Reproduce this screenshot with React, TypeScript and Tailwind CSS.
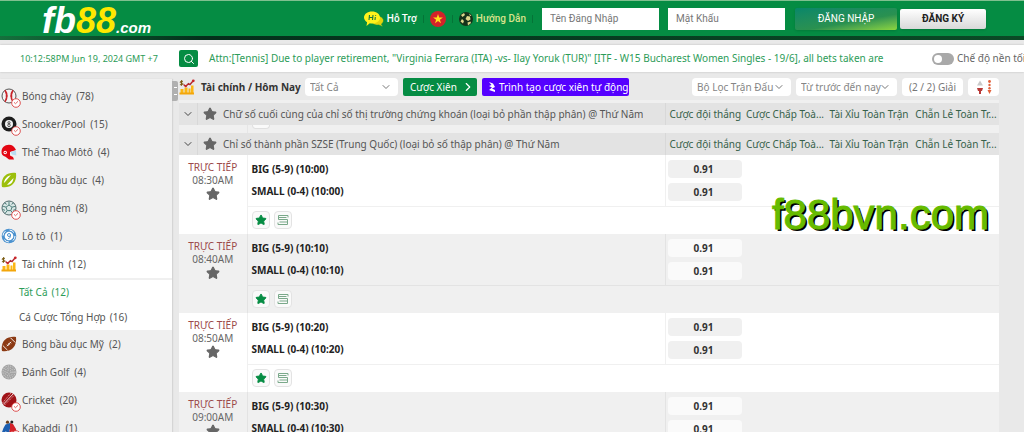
import { useState, type ReactNode } from "react";
import { ChevronDown, ChevronRight, Search, Star } from "lucide-react";

type Sport = {
  name: string;
  count: number;
  icon: ReactNode;
  live?: boolean;
};

type Match = {
  time: string;
  draw: string;
};

/* Sport icons */
const BaseballIcon = () => (
  <svg viewBox="0 0 16 16" className="size-4">
    <circle cx="8" cy="8" r="7" fill="#f4f4f4" stroke="#555" strokeWidth="1" />
    <path d="M4 2.300c2.400 3.200 2.400 8.200 0 11.400M12 2.300c-2.400 3.200-2.400 8.200 0 11.400" fill="none" stroke="#c9252b" strokeWidth="1.600" />
    <path d="M4 5l2-.6M4.500 8h2.200M4 11l2 .6M12 5l-2-.6M11.500 8H9.300" stroke="#c9252b" strokeWidth="0.800" />
  </svg>
);

const PoolIcon = () => (
  <svg viewBox="0 0 16 16" className="size-4">
    <circle cx="8" cy="8" r="7.500" fill="#1d1d1d" />
    <circle cx="8" cy="8" r="4" fill="#f2f2f2" />
    <circle cx="8" cy="6.700" r="1.100" fill="none" stroke="#333" strokeWidth="0.800" />
    <circle cx="8" cy="9.300" r="1.300" fill="none" stroke="#333" strokeWidth="0.800" />
  </svg>
);

const HelmetIcon = () => (
  <svg viewBox="0 0 16 16" className="size-4">
    <path d="M8 .8C3.500.8.5 3.800.5 8c0 2.500 1.300 4 4 4.800L8 15.500h5l-1-2.500-3-1.500V8l6-2C13.500 2.500 11 .8 8 .8z" fill="#e30613" />
    <path d="M9.500 8l5.500-1.500.3 5-4.300-1z" fill="#b9dcf2" />
    <circle cx="4.200" cy="8.500" r="1.700" fill="#fff" />
    <circle cx="4.200" cy="8.500" r="0.800" fill="#e30613" />
  </svg>
);

const RugbyIcon = () => (
  <svg viewBox="0 0 16 16" className="size-4">
    <path d="M1 15C.3 11 1 6.500 4 3.800 7 1 11 .5 15 1c.6 4-.3 8.300-3 11-2.800 2.800-7 3.700-11 3z" fill="#9cbf0c" />
    <path d="M2.800 11C3.200 8.500 4.500 5.800 7 4.200L10 3 4 10zM6 12.800L12.500 6c-.3 2.500-1 4.500-2.500 5.600-1.200.9-2.500 1.200-4 1.200z" fill="#fff" />
  </svg>
);

const HandballIcon = () => (
  <svg viewBox="0 0 16 16" className="size-4">
    <circle cx="8" cy="8" r="7" fill="#d9e7e6" stroke="#50686a" strokeWidth="1" />
    <path d="M8 5l3 2.200-1.200 3.400H6.200L5 7.200zM8 5V1.500M11 7.200l3.500-1M9.800 10.600l2.200 3M6.200 10.600L4 13.500M5 7.200L1.500 6M3.500 3l2.200 1.300M12.500 3l-2 1.300M1.500 9.500l2.500.8M14.500 9.500l-2.300.8" fill="none" stroke="#50807c" strokeWidth="1" />
  </svg>
);

const LottoIcon = () => (
  <svg viewBox="0 0 16 16" className="size-4">
    <circle cx="8" cy="8" r="7.300" fill="#4b92cf" />
    <circle cx="8" cy="8" r="6" fill="none" stroke="#fff" strokeWidth="1" strokeDasharray="5 4.400" />
    <circle cx="8" cy="8" r="4.300" fill="#fff" />
    <circle cx="8" cy="7" r="1.500" fill="none" stroke="#4b92cf" strokeWidth="1" />
    <path d="M9.500 7c.1 2-.6 3.300-2.200 3.600" fill="none" stroke="#4b92cf" strokeWidth="1" />
  </svg>
);

const FinanceIcon = () => (
  <svg viewBox="0 0 16 16" className="size-4 shrink-0">
    <path d="M1.500 10h3v4h-3zM5.500 8.500h3v5.500h-3zM9.500 9.500h2v4.500h-2zM12 6.500h2.500V14H12z" fill="#fbb614" />
    <path d="M.5 13.500h14.500V15.500H.5z" fill="#f3a60b" />
    <path d="M4.500 5.500l2.200 1.800 2.800-2.600 1.500.8L14 2" fill="none" stroke="#b22a2e" strokeWidth="1.400" />
    <circle cx="14.300" cy="1.800" r="1.400" fill="#c9252b" />
    <circle cx="6.700" cy="7.200" r="1.100" fill="#c9252b" />
    <path d="M4 2.300H2.200c-1.400 0-1.400 1.700 0 1.700h.6c1.500 0 1.500 1.700 0 1.700H.9M2.500 1.200v5.500" fill="none" stroke="#7a5a10" strokeWidth="1" />
  </svg>
);

const FootballIcon = () => (
  <svg viewBox="0 0 16 16" className="size-4">
    <path d="M1 15C.3 11 1 6.500 4 3.800 7 1 11 .5 15 1c.6 4-.3 8.300-3 11-2.800 2.800-7 3.700-11 3z" fill="#8c3a14" />
    <path d="M1.800 9.500l4.700 4.700M9.500 1.800l4.700 4.700" stroke="#fff" strokeWidth="0.900" />
    <path d="M5.800 10.200l4.400-4.400M6 8.500L7.500 10M7.300 7.200l1.500 1.500M8.600 5.900l1.500 1.500" stroke="#fff" strokeWidth="0.800" />
  </svg>
);

const GolfIcon = () => (
  <svg viewBox="0 0 16 16" className="size-4">
    <circle cx="8" cy="8" r="7.500" fill="#a4a4a4" />
    <circle cx="8" cy="8" r="6" fill="none" stroke="#dadada" strokeWidth="1" strokeDasharray="1 1.400" />
    <circle cx="8" cy="8" r="4" fill="none" stroke="#dadada" strokeWidth="1" strokeDasharray="1 1.400" />
    <circle cx="8" cy="8" r="2" fill="none" stroke="#dadada" strokeWidth="1" strokeDasharray="1 1.400" />
  </svg>
);

const CricketIcon = () => (
  <svg viewBox="0 0 16 16" className="size-4">
    <circle cx="8" cy="8" r="7.500" fill="#a01318" />
    <path d="M1.500 11L10 1M3.500 13L13.500 3" stroke="#e9b6b6" strokeWidth="0.800" strokeDasharray="1.500 0.800" />
    <path d="M2.500 12.200L12 2" stroke="#fff" strokeWidth="0.800" />
  </svg>
);

const KabaddiIcon = () => (
  <svg viewBox="0 0 16 16" className="size-4">
    <path d="M4.500 4.500L9 3l2 3-2.500 4 1 5H6.500L5 11l-3 4H0l2.500-7z" fill="#1c5fb0" />
    <path d="M9 3l3 1 3 5 .5 6H13l-2-4-2 4H8l1-7z" fill="#d42229" />
    <circle cx="6.500" cy="2.200" r="1.600" fill="#6b3f1d" />
    <circle cx="10.800" cy="2" r="1.500" fill="#222" />
  </svg>
);

const LiveClock = () => (
  <svg viewBox="0 0 10 10" className="absolute -right-1 -bottom-1 size-2.5">
    <circle cx="5" cy="5" r="4.300" fill="#fff" stroke="#d9403f" strokeWidth="0.900" />
    <path d="M4.500 5.700L7 3.300M3 4.300l1.500 1.400" fill="none" stroke="#d9403f" strokeWidth="0.800" />
  </svg>
);

const SPORTS_TOP: Sport[] = [
  { name: "Bóng chày", count: 78, icon: <BaseballIcon />, live: true },
  { name: "Snooker/Pool", count: 15, icon: <PoolIcon />, live: true },
  { name: "Thể Thao Môtô", count: 4, icon: <HelmetIcon /> },
  { name: "Bóng bầu dục", count: 4, icon: <RugbyIcon /> },
  { name: "Bóng ném", count: 8, icon: <HandballIcon />, live: true },
  { name: "Lô tô", count: 1, icon: <LottoIcon /> },
];

const SPORTS_BOTTOM: Sport[] = [
  { name: "Bóng bầu dục Mỹ", count: 2, icon: <FootballIcon /> },
  { name: "Đánh Golf", count: 4, icon: <GolfIcon /> },
  { name: "Cricket", count: 20, icon: <CricketIcon />, live: true },
  { name: "Kabaddi", count: 1, icon: <KabaddiIcon />, live: true },
];

const MATCHES: Match[] = [
  { time: "08:30AM", draw: "10:00" },
  { time: "08:40AM", draw: "10:10" },
  { time: "08:50AM", draw: "10:20" },
  { time: "09:00AM", draw: "10:30" },
];

const MARKETS = ["Cược đội thắng", "Cược Chấp Toà...", "Tài Xỉu Toàn Trận", "Chẵn Lẻ Toàn Tr..."];

function SportLink({ sport }: { sport: Sport }) {
  return (
    <li>
      <a href="#" className="flex h-7 items-center gap-[5px] pl-px">
        <span className="relative">
          {sport.icon}
          {sport.live && <LiveClock />}
        </span>
        <span>{sport.name}</span>
        <span>({sport.count})</span>
      </a>
    </li>
  );
}

function FilterSelect({ label, value, className }: { label: string; value: string; className: string }) {
  return (
    <div className={`relative shrink-0 ${className}`}>
      <select
        aria-label={label}
        className="block h-[18px] w-full appearance-none rounded-sm bg-white pl-[5px] text-[10px] leading-[18px] text-[#858585]"
      >
        <option>{value}</option>
      </select>
      <ChevronDown className="pointer-events-none absolute top-[3px] right-1.5 size-3 text-[#777]" />
    </div>
  );
}

function GroupHeader({ title }: { title: string }) {
  return (
    <tr className="h-[22px] bg-[#e3e3e3]">
      <th colSpan={2} scope="colgroup" className="p-0 font-normal">
        <div className="flex items-center">
          <button aria-label="Thu gọn" className="flex h-[22px] w-[19px] shrink-0 items-center justify-center border-r border-[#d8d8d8]">
            <ChevronDown className="size-3 text-[#444]" />
          </button>
          <Star className="ml-[5px] size-3.5 shrink-0 fill-[#666] text-[#666]" />
          <span className="ml-[6px] truncate">{title}</span>
        </div>
      </th>
      {MARKETS.map((market, i) => (
        <th
          key={market}
          scope="col"
          className={`p-0 text-center font-normal whitespace-nowrap text-[#36614a] ${i === 0 ? "border-l border-[#d8d8d8]" : ""}`}
        >
          {market}
        </th>
      ))}
    </tr>
  );
}

function MatchRows({ match, odd }: { match: Match; odd: boolean }) {
  const rowBg = odd ? "bg-[#f0f0f0]" : "bg-white";
  const oddsBg = odd ? "bg-[#fafafa]" : "bg-[#f0f0f0]";
  const line = odd ? "border-[#e3e3e3]" : "border-[#f0f0f0]";

  return (
    <>
      <tr className={`h-[51px] ${rowBg}`}>
        <td rowSpan={2} className={`border-r p-0 pt-1.5 text-center align-top leading-[13px] ${line}`}>
          <div className="text-[#9c4a4a]">TRỰC TIẾP</div>
          <div className="text-[#666]">{match.time}</div>
          <button aria-label="Yêu thích" className="block w-full">
            <Star className="mx-auto size-3.5 fill-[#666] text-[#666]" />
          </button>
        </td>
        <td className="p-0 pt-1 pl-1 align-top font-bold text-[#222]">
          <div className="h-[22px] leading-[20px]">BIG (5-9) ({match.draw})</div>
          <div className="h-[22px] leading-[20px]">SMALL (0-4) ({match.draw})</div>
        </td>
        <td className={`border-l p-0 pt-[5px] pl-0.5 align-top font-bold text-[#333] ${line}`}>
          <button className={`mb-[5px] block h-[18px] w-[74px] rounded-sm pr-0.5 text-center ${oddsBg}`}>0.91</button>
          <button className={`block h-[18px] w-[74px] rounded-sm pr-0.5 text-center ${oddsBg}`}>0.91</button>
        </td>
        <td colSpan={3} />
      </tr>
      <tr className={`h-[28px] ${rowBg}`}>
        <td colSpan={5} className={`border-t p-0 pl-1 ${line}`}>
          <div className="flex gap-1">
            <button aria-label="Thêm yêu thích" className="flex size-[18px] items-center justify-center rounded-sm border border-[#e3e3e3] bg-[#fafafa]">
              <Star className="size-3 fill-[#058c43] text-[#058c43]" />
            </button>
            <button aria-label="Thống kê" className="flex size-[18px] items-center justify-center rounded-sm border border-[#e3e3e3] bg-[#fafafa]">
              <svg viewBox="0 0 12 12" className="size-3" fill="none" stroke="#7aa98a" strokeWidth="1">
                <path d="M11 1.500H1.500v4h9v5H1M11 1.500v2M1 10.500v-2M1.500 3.500h8M2.500 8h8" />
              </svg>
            </button>
          </div>
        </td>
      </tr>
    </>
  );
}

export default function App() {
  const [darkMode, setDarkMode] = useState(false);

  return (
    <div className="relative flex h-screen flex-col overflow-hidden bg-[#e9e9e9] font-['Noto_Sans',sans-serif] text-[10px] text-[#555]">
      {/* Header */}
      <header className="flex h-9 shrink-0 items-center border-t border-[#7fc08f] bg-[#058c43] pr-[38px] pl-[42px] font-['Roboto',sans-serif]">
        <a href="#" className="flex items-baseline pt-1 font-['Liberation_Sans',sans-serif] text-4xl leading-none font-bold text-white italic">
          <span>fb</span>
          <span className="text-[#ffe800]">88</span>
          <span className="text-[15px] leading-none">.com</span>
        </a>

        <nav className="ml-auto flex items-center font-medium">
          <a href="#" className="flex items-center gap-[3px] text-white">
            <svg viewBox="0 0 20 16" className="h-4 w-5">
              <path d="M13 5c4 0 6.500 2 6.500 4.500 0 1.600-.8 2.700-2 3.500l1.300 2.700-4-1.700C11 14.500 8 13 8 10z" fill="#e3d40c" stroke="#058c43" strokeWidth="0.600" />
              <path d="M8 .5c4.500 0 8 2.600 8 6s-3.500 6-8 6c-.8 0-1.500 0-2.200-.2L2.500 15l.6-3.800C1.200 10 0 8.400 0 6.500c0-3.400 3.500-6 8-6z" fill="#fff21c" />
              <path d="M5.500 4l-.5 5M9 4l-.5 5M5.300 6.500h3.400M11.300 6l-.3 3M11.600 4v.7" stroke="#1c7a3c" strokeWidth="1.100" />
            </svg>
            Hỗ Trợ
          </a>
          <span className="mx-1.5 h-2 w-px bg-[#047437]" />
          <button aria-label="Tiếng Việt">
            <svg viewBox="0 0 16 16" className="size-4">
              <circle cx="8" cy="8" r="8" fill="#d3222a" />
              <path d="M8 3l1.200 3.500h3.700l-3 2.200 1.100 3.500L8 10.100l-3 2.100 1.100-3.500-3-2.200h3.700z" fill="#ffe11a" />
            </svg>
          </button>
          <span className="mx-1.5 h-2 w-px bg-[#047437]" />
          <a href="#" className="flex items-center gap-[3px] text-[#d9e38c]">
            <svg viewBox="0 0 14 14" className="size-3.5">
              <circle cx="7" cy="7" r="7" fill="#15321a" />
              <path d="M2 3l3-2 1 2-2.500 2zM8 4l3 .5.5 3L9 9 6.500 7zM3 7l2 2-1 2.500-2.500-2zM8.500 10.500l3-1 .5 1.500-3 2.500zM10 1.500l2.500 2.200-1.500.3z" fill="#dcd68a" />
            </svg>
            Hướng Dẫn
          </a>
          <span className="mx-1.5 h-2 w-px bg-[#047437]" />
        </nav>

        <form className="ml-[3px] flex items-center font-normal" onSubmit={(e) => e.preventDefault()}>
          <input
            type="text"
            aria-label="Tên Đăng Nhập"
            placeholder="Tên Đăng Nhập"
            className="h-[22px] w-[117px] bg-white px-2 placeholder:text-[#777]"
          />
          <input
            type="password"
            aria-label="Mật Khẩu"
            placeholder="Mật Khẩu"
            className="ml-[9px] h-[22px] w-[117px] bg-white px-2 placeholder:text-[#777]"
          />
          <button
            type="submit"
            className="ml-[10px] h-[22px] w-[102px] rounded-xs bg-linear-170 from-[#06876a] via-[#2a9150] via-60% to-[#8cd63c] text-white shadow"
          >
            ĐĂNG NHẬP
          </button>
          <button
            type="button"
            className="ml-[3px] h-5 w-[86px] rounded-xs bg-linear-to-b from-white to-[#d9d9d9] font-bold text-[#222] shadow"
          >
            ĐĂNG KÝ
          </button>
        </form>
      </header>
      <div className="h-1 shrink-0 bg-linear-to-r from-[#15703c] via-[#04301b] via-20% to-[#0b4a26]" />

      {/* Announcement bar */}
      <div className="mt-[5px] flex h-[27px] shrink-0 items-center overflow-hidden bg-white pl-5 whitespace-nowrap text-[#2c9c58] shadow-[0_0_2px_#bbb]">
        <time className="w-[159px] shrink-0 text-[9px]">10:12:58PM Jun 19, 2024 GMT +7</time>
        <button aria-label="Tìm kiếm" className="flex h-[17px] w-[19px] shrink-0 items-center justify-center rounded-xs bg-[#058c43] text-white">
          <Search className="size-3" />
        </button>
        <p className="ml-[11px] flex-1">
          Attn:[Tennis] Due to player retirement, "Virginia Ferrara (ITA) -vs- Ilay Yoruk (TUR)" [ITF - W15 Bucharest Women Singles - 19/6], all bets taken are
        </p>
        <label className="flex w-[92px] shrink-0 items-center gap-[3px] text-[#666]">
          <input
            type="checkbox"
            role="switch"
            checked={darkMode}
            onChange={(e) => setDarkMode(e.target.checked)}
            className="h-3 w-[22px] shrink-0 appearance-none rounded-full bg-[#a9a9a9] p-0.5 before:block before:size-2 before:rounded-full before:bg-white checked:before:ml-auto"
          />
          Chế độ nền tối
        </label>
      </div>

      <div className="flex min-h-0 flex-1">
        {/* Sports menu */}
        <aside className="mt-[7px] w-[172px] shrink-0 bg-[#f0f0f0] shadow-[1px_0_1px_#d5d5d5]">
          <ul className="pt-[3px]">
            {SPORTS_TOP.map((sport) => (
              <SportLink key={sport.name} sport={sport} />
            ))}
          </ul>
          <div className="bg-white">
            <ul className="border-b-2 border-[#f0f0f0]">
              <SportLink sport={{ name: "Tài chính", count: 12, icon: <FinanceIcon /> }} />
            </ul>
            <ul className="pl-[19px]">
              <li>
                <a href="#" className="flex h-[25px] items-center gap-1 text-[#2c9c58]">
                  <span>Tất Cả</span>
                  <span>(12)</span>
                </a>
              </li>
              <li>
                <a href="#" className="flex h-[25px] items-center gap-1">
                  <span>Cá Cược Tổng Hợp</span>
                  <span>(16)</span>
                </a>
              </li>
            </ul>
          </div>
          <ul>
            {SPORTS_BOTTOM.map((sport) => (
              <SportLink key={sport.name} sport={sport} />
            ))}
          </ul>
        </aside>
        <button aria-label="Thu gọn menu" className="mt-[9px] flex h-5 w-[6px] shrink-0 items-center justify-center rounded-r-xs bg-[#b0b0b0]">
          <span className="h-2 w-[3px] border-y border-white" />
        </button>

        {/* Odds */}
        <main className="mr-[25px] ml-px min-w-0 flex-1">
          <div className="flex h-[28px] items-center whitespace-nowrap pt-[2px]">
            <FinanceIcon />
            <h1 className="ml-[6px] w-[104px] shrink-0 font-bold text-[#333]">Tài chính / Hôm Nay</h1>
            <FilterSelect label="Giải đấu" value="Tất Cả" className="w-[93px]" />
            <button className="ml-[5px] flex h-[18px] w-[74px] shrink-0 items-center justify-between rounded-xs bg-[#058c43] pr-0.5 pl-[7px] text-white">
              Cược Xiên
              <ChevronRight className="size-3.5" />
            </button>
            <button className="ml-[5px] flex h-[18px] w-[147px] shrink-0 items-center gap-[3px] rounded-xs bg-[#5500ff] pl-[6px] text-white">
              <svg viewBox="0 0 8 12" className="h-3 w-2 shrink-0" fill="currentColor">
                <path d="M1 1l4 1.500L7 6 4 7.500 7 9v2L1 9l3-2.500L1 5l2.500-1z" />
              </svg>
              Trình tạo cược xiên tự động
            </button>
            <div className="ml-auto flex gap-[5px]">
              <FilterSelect label="Bộ lọc" value="Bộ Lọc Trận Đấu" className="w-[99px]" />
              <FilterSelect label="Thời gian" value="Từ trước đến nay" className="w-[101px]" />
              <button className="h-[18px] w-[61px] rounded-sm bg-white text-[#777]">(2 / 2) Giải</button>
              <button aria-label="Sắp xếp" className="flex h-[18px] w-[31px] items-center justify-center rounded-sm bg-white">
                <svg viewBox="0 0 16 14" className="h-3.5 w-4">
                  <path d="M1 5.500L4 .5l3 5z" fill="#c9c9c9" />
                  <path d="M1 8h6l-1 3H5v3H3v-3H2z" fill="#b83a38" />
                  <path d="M11.500 10h4l-2 4z" fill="#e2603a" />
                  <circle cx="13.500" cy="1.500" r="1.400" fill="#e2603a" />
                  <circle cx="13.500" cy="5" r="1.200" fill="#e2603a" />
                  <circle cx="13.500" cy="8.300" r="1.200" fill="#e2603a" />
                </svg>
              </button>
            </div>
          </div>

          <div className="border-t-3 border-[#f0f0f0]">
            <table className="w-full table-fixed border-collapse">
              <colgroup>
                <col className="w-[68px]" />
                <col />
                <col className="w-[80px]" />
                <col className="w-[80px]" />
                <col className="w-[88px]" />
                <col className="w-[86px]" />
              </colgroup>
              <tbody>
                <GroupHeader title="Chữ số cuối cùng của chỉ số thị trường chứng khoán (loại bỏ phần thập phân) @ Thứ Năm" />
                <tr className="h-2 bg-[#f0f0f0]">
                  <td className="border-r border-[#e6e6e6] p-0" />
                  <td colSpan={5} className="p-0 pl-1 align-top">
                    <div className="h-1 w-[18px] rounded-b-sm border border-t-0 border-[#e0e0e0] bg-[#fafafa]" />
                  </td>
                </tr>
                <GroupHeader title="Chỉ số thành phần SZSE (Trung Quốc) (loại bỏ số thập phân) @ Thứ Năm" />
                {MATCHES.map((match, i) => (
                  <MatchRows key={match.time} match={match} odd={i % 2 === 1} />
                ))}
              </tbody>
            </table>
          </div>
        </main>
      </div>

      {/* Watermark */}
      <div className="pointer-events-none absolute top-[191px] right-[35px] font-['Liberation_Sans',sans-serif] text-[42px] leading-[48px] text-[#66bb00] [-webkit-text-stroke:1px_#66bb00] [text-shadow:2px_2px_0_#000]">
        f88bvn.com
      </div>
    </div>
  );
}
